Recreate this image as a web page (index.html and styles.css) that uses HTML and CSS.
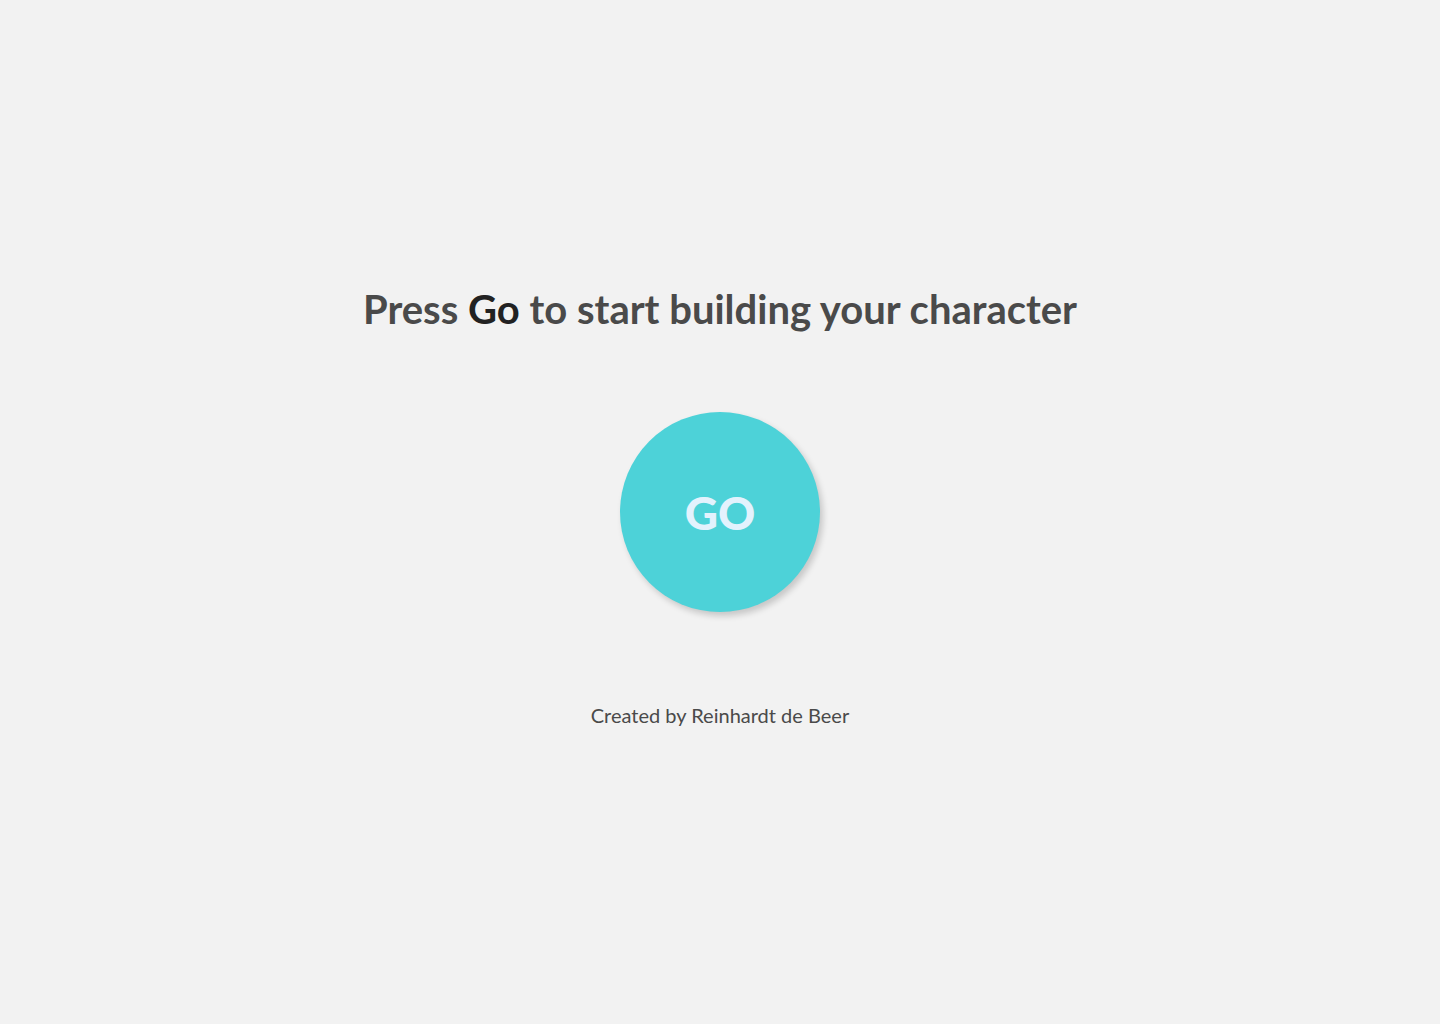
FILE: index.html
```html
<!DOCTYPE html>
<html lang="en">
<head>
<meta charset="utf-8">
<title>Character Builder</title>
<link rel="stylesheet" href="styles.css">
</head>
<body>
<main class="intro">
  <h1 class="intro-title">Press <strong class="intro-go">Go</strong> to start building your character</h1>
  <button class="go-button" type="button">GO</button>
  <p class="credit">Created by Reinhardt de Beer</p>
</main>
</body>
</html>
```

FILE: styles.css
```css
html, body {
  margin: 0;
  padding: 0;
}
body {
  background: #f2f2f2;
  font-family: Lato, "Open Sans", sans-serif;
  color: #4a4a4a;
  min-height: 1024px;
}
.intro {
  display: flex;
  flex-direction: column;
  align-items: center;
  padding-top: 285px;
}
.intro-title {
  margin: 0;
  font-size: 40px;
  line-height: 48px;
  font-weight: 700;
  color: #4a4a4a;
}
.intro-go {
  color: #222222;
  font-weight: 700;
}
.go-button {
  margin-top: 79px;
  width: 200px;
  height: 200px;
  border-radius: 50%;
  border: none;
  padding: 0;
  background: #4dd2d8;
  color: #e3f2fd;
  font-family: Lato, sans-serif;
  font-weight: 900;
  font-size: 46px;
  box-shadow: 3px 4px 6px rgba(0, 0, 0, 0.18);
  cursor: pointer;
}
.credit {
  margin: 91px 0 0;
  font-size: 20px;
  line-height: 24px;
  color: #4a4a4a;
}
```
